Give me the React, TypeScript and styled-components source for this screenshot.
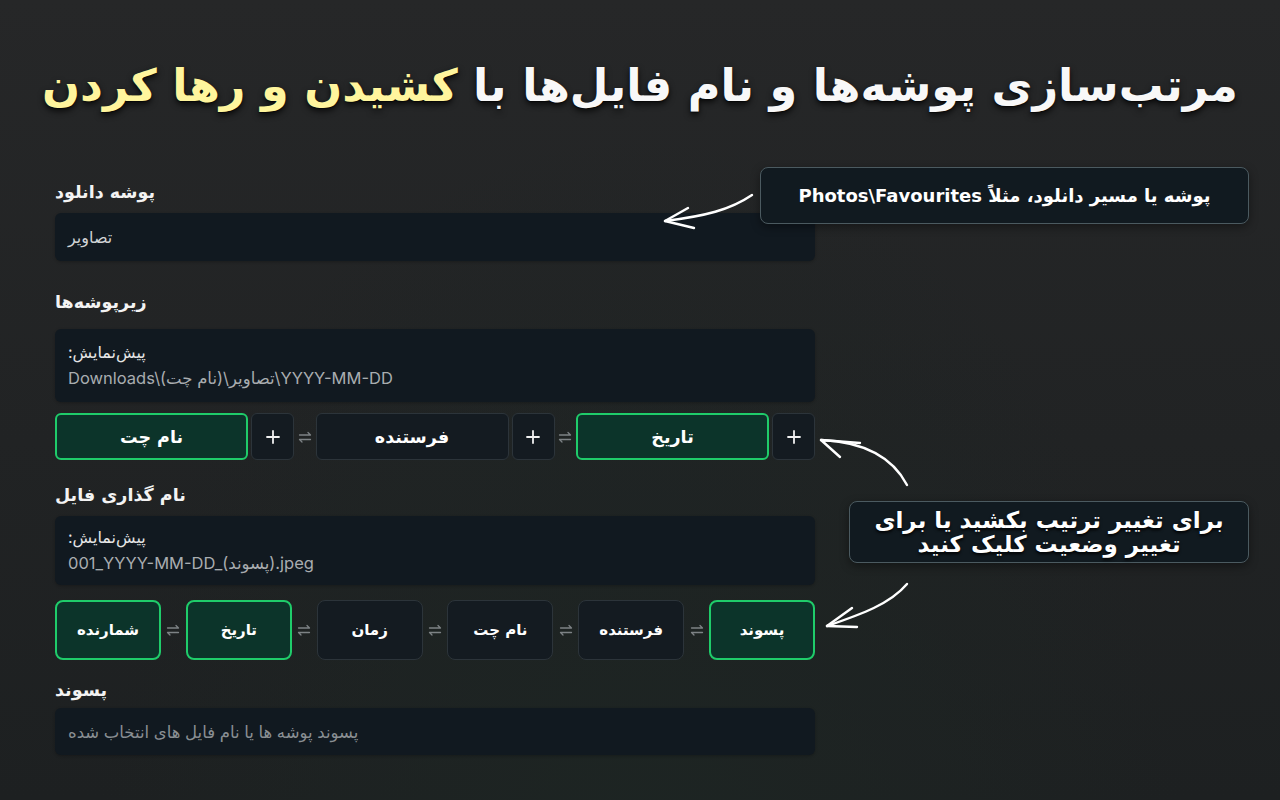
import React from "react";
import styled, { createGlobalStyle } from "styled-components";

const Global = createGlobalStyle`
  html, body { margin: 0; padding: 0; background: #1f2122; }
  * { box-sizing: border-box; }
`;

const Page = styled.div`
  position: relative;
  width: 1280px;
  height: 800px;
  overflow: hidden;
  background: radial-gradient(ellipse at 50% 110%, #1d2523 0%, rgba(29,37,35,0) 60%),
    linear-gradient(180deg, #262728 0%, #212324 55%, #1d2021 100%);
  font-family: Inter, "DejaVu Sans", sans-serif;
  color: #f2f2f2;
`;

const Title = styled.h1`
  margin: 0;
  padding-top: 57px;
  height: 182px;
  direction: rtl;
  text-align: center;
  font-family: "DejaVu Sans", sans-serif;
  font-size: 44.6px;
  font-weight: 900;
  line-height: 58px;
  color: #f8f8f8;
  text-shadow: 0 3px 6px rgba(0, 0, 0, 0.8), 0 1px 1px rgba(0, 0, 0, 0.6);
`;

const Accent = styled.span`
  color: #fff59d;
`;

const Form = styled.div`
  width: 760px;
  margin-left: 55px;
  display: flex;
  flex-direction: column;
`;

const Label = styled.div<{ $top: number; $gap: number }>`
  margin-top: ${(p) => p.$top}px;
  margin-bottom: ${(p) => p.$gap}px;
  direction: rtl;
  text-align: left;
  font-family: "DejaVu Sans", sans-serif;
  font-weight: 700;
  font-size: 17.5px;
  line-height: 20px;
  color: #f3f3f3;
`;

const Input = styled.div<{ $h: number; $muted?: boolean }>`
  height: ${(p) => p.$h}px;
  background: #111920;
  border-radius: 6px;
  padding: 0 13px;
  display: flex;
  align-items: center;
  direction: rtl;
  justify-content: flex-end;
  font-size: ${(p) => (p.$muted ? 16.5 : 16)}px;
  color: ${(p) => (p.$muted ? "#8a8f93" : "#d2d4d6")};
  box-shadow: 0 1px 3px rgba(0, 0, 0, 0.25);
`;

const Preview = styled.div<{ $h: number }>`
  height: ${(p) => p.$h}px;
  background: #111920;
  border-radius: 6px;
  padding: 0 13px;
  display: flex;
  flex-direction: column;
  justify-content: center;
  gap: 6px;
  box-shadow: 0 1px 3px rgba(0, 0, 0, 0.25);
`;

const PreviewCaption = styled.div`
  direction: rtl;
  text-align: left;
  font-size: 16px;
  line-height: 19px;
  color: #e6e6e6;
`;

const PreviewPath = styled.div`
  direction: ltr;
  text-align: left;
  font-family: Inter, "DejaVu Sans", sans-serif;
  font-size: 16.5px;
  line-height: 20px;
  color: #a9adb0;
`;

const ChipRow = styled.div<{ $top: number; $h: number }>`
  margin-top: ${(p) => p.$top}px;
  height: ${(p) => p.$h}px;
  display: flex;
  align-items: stretch;
`;

const Chip = styled.div<{ $active?: boolean; $w: number; $r: number; $fs: number }>`
  width: ${(p) => p.$w}px;
  flex: none;
  border-radius: ${(p) => p.$r}px;
  display: flex;
  align-items: center;
  justify-content: center;
  font-family: "DejaVu Sans", sans-serif;
  font-weight: 700;
  font-size: ${(p) => p.$fs}px;
  color: #ffffff;
  background: ${(p) => (p.$active ? "#0c342a" : "#141b21")};
  border: ${(p) => (p.$active ? "2px solid #1fcc6a" : "1px solid #2c343a")};
`;

const PlusButton = styled.div`
  width: 43px;
  flex: none;
  margin-left: 3px;
  border-radius: 6px;
  background: #141b21;
  border: 1px solid #2c343a;
  display: flex;
  align-items: center;
  justify-content: center;
`;

const Swap = styled.div`
  flex: 1;
  display: flex;
  align-items: center;
  justify-content: center;
`;

const Tip = styled.div<{ $x: number; $y: number; $w: number; $h: number }>`
  position: absolute;
  left: ${(p) => p.$x}px;
  top: ${(p) => p.$y}px;
  width: ${(p) => p.$w}px;
  height: ${(p) => p.$h}px;
  background: #111a20;
  border: 1.5px solid #4b5a60;
  border-radius: 8px;
  display: flex;
  align-items: center;
  justify-content: center;
  direction: rtl;
  text-align: center;
  font-family: "DejaVu Sans", sans-serif;
  font-weight: 700;
  color: #ffffff;
  box-shadow: 0 3px 10px rgba(0, 0, 0, 0.4);
`;

const TipSmall = styled.span`
  font-size: 18px;
  line-height: 22px;
`;

const TipBig = styled.span`
  font-size: 23px;
  line-height: 24px;
  font-weight: 900;
  text-shadow: 0 2px 3px rgba(0, 0, 0, 0.9);
`;

const Overlay = styled.svg`
  position: absolute;
  left: 0;
  top: 0;
  pointer-events: none;
`;

const PlusIcon = () => (
  <svg width="14" height="14" viewBox="0 0 14 14">
    <path d="M7 1v12M1 7h12" stroke="#f0f0f0" strokeWidth="1.8" strokeLinecap="round" />
  </svg>
);

const SwapIcon = () => (
  <svg width="14" height="14" viewBox="0 0 14 14" fill="none">
    <path d="M1.5 5h11l-2.5-2.5" stroke="#7d8285" strokeWidth="1.3" strokeLinecap="round" strokeLinejoin="round" />
    <path d="M12.5 9.5h-11l2.5 2.5" stroke="#7d8285" strokeWidth="1.3" strokeLinecap="round" strokeLinejoin="round" />
  </svg>
);

type ChipDef = { label: string; active?: boolean };

const folderChips: ChipDef[] = [
  { label: "نام چت", active: true },
  { label: "فرستنده" },
  { label: "تاریخ", active: true },
];

const fileChips: ChipDef[] = [
  { label: "شمارنده", active: true },
  { label: "تاریخ", active: true },
  { label: "زمان" },
  { label: "نام چت" },
  { label: "فرستنده" },
  { label: "پسوند", active: true },
];

export default function App() {
  return (
    <Page>
      <Global />
      <Title>
        مرتب‌سازی پوشه‌ها و نام فایل‌ها با <Accent>کشیدن و رها کردن</Accent>
      </Title>
      <Form>
        <Label $top={0} $gap={11}>پوشه دانلود</Label>
        <Input $h={48}>تصاویر</Input>

        <Label $top={31} $gap={17}>زیرپوشه‌ها</Label>
        <Preview $h={73}>
          <PreviewCaption>پیش‌نمایش:</PreviewCaption>
          <PreviewPath>{"Downloads\\\u200E(نام چت)\u200E\\تصاویر\u200E\\YYYY-MM-DD"}</PreviewPath>
        </Preview>
        <ChipRow $top={11} $h={47}>
          {folderChips.map((c, i) => (
            <React.Fragment key={c.label}>
              {i > 0 && (
                <Swap>
                  <SwapIcon />
                </Swap>
              )}
              <Chip $active={c.active} $w={193} $r={6} $fs={17.5}>{c.label}</Chip>
              <PlusButton>
                <PlusIcon />
              </PlusButton>
            </React.Fragment>
          ))}
        </ChipRow>

        <Label $top={25} $gap={11}>نام گذاری فایل</Label>
        <Preview $h={69}>
          <PreviewCaption>پیش‌نمایش:</PreviewCaption>
          <PreviewPath>001_YYYY-MM-DD_(پسوند).jpeg</PreviewPath>
        </Preview>
        <ChipRow $top={15} $h={60}>
          {fileChips.map((c, i) => (
            <React.Fragment key={c.label + i}>
              {i > 0 && (
                <Swap>
                  <SwapIcon />
                </Swap>
              )}
              <Chip $active={c.active} $w={106} $r={8} $fs={15}>{c.label}</Chip>
            </React.Fragment>
          ))}
        </ChipRow>

        <Label $top={20} $gap={8}>پسوند</Label>
        <Input $h={47} $muted>
          پسوند پوشه ها یا نام فایل های انتخاب شده
        </Input>
      </Form>

      <Tip $x={760} $y={167} $w={489} $h={57}>
        <TipSmall>پوشه یا مسیر دانلود، مثلاً Photos\Favourites</TipSmall>
      </Tip>
      <Tip $x={849} $y={501} $w={400} $h={62}>
        <TipBig>
          برای تغییر ترتیب بکشید یا برای
          <br />
          تغییر وضعیت کلیک کنید
        </TipBig>
      </Tip>

      <Overlay width="1280" height="800" viewBox="0 0 1280 800" fill="none">
        <g stroke="#ffffff" strokeWidth="2.4" strokeLinecap="round" strokeLinejoin="round">
          <path d="M752 195 C730 210 705 216 665 221" />
          <path d="M665 221 L688 208 M665 221 L694 228" />
          <path d="M907 485 C893 458 865 442 821 440" />
          <path d="M821 440 L860 443 M821 440 L840 457" />
          <path d="M907 584 C890 604 862 614 827 626" />
          <path d="M827 626 L857 627 M827 626 L852 608" />
        </g>
      </Overlay>
    </Page>
  );
}
